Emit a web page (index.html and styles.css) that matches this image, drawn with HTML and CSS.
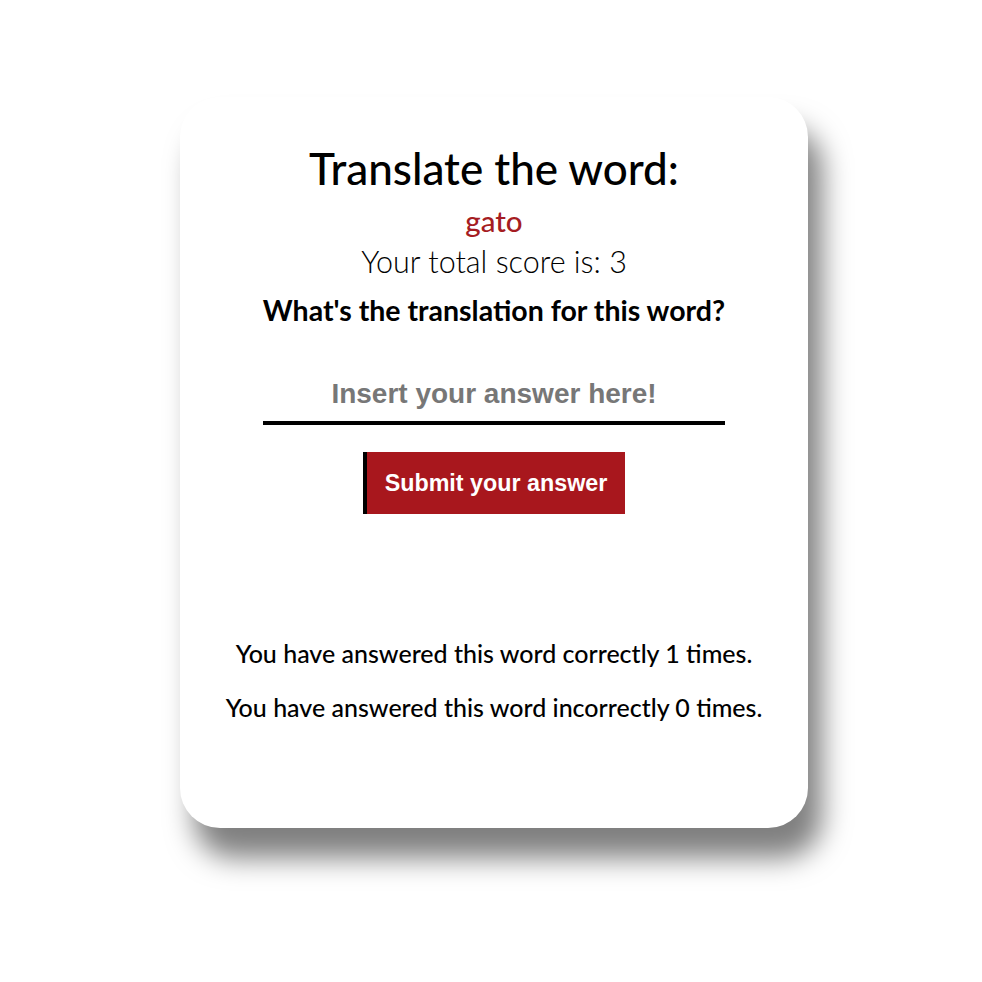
FILE: index.html
```html
<!DOCTYPE html>
<html lang="en">
<head>
<meta charset="utf-8">
<title>Translate the word</title>
<link rel="stylesheet" href="styles.css">
</head>
<body>
<main class="card">
  <h1 class="title">Translate the word:</h1>
  <p class="word">gato</p>
  <p class="score">Your total score is: 3</p>
  <h2 class="question">What's the translation for this word?</h2>
  <form class="answer-form">
    <input class="answer-input" type="text" placeholder="Insert your answer here!">
    <button class="submit-btn" type="button">Submit your answer</button>
  </form>
  <div class="stats">
    <p class="stat">You have answered this word correctly 1 times.</p>
    <p class="stat">You have answered this word incorrectly 0 times.</p>
  </div>
</main>
</body>
</html>
```

FILE: styles.css
```css
html, body {
  margin: 0;
  padding: 0;
  background: #ffffff;
}

body {
  box-sizing: border-box;
  min-height: 100vh;
  padding: 97px 0 0 180px;
  font-family: Lato, "Open Sans", sans-serif;
  color: #000;
}

.card {
  box-sizing: border-box;
  width: 628px;
  height: 731px;
  background: #fff;
  border-radius: 40px;
  box-shadow: 14px 30px 28px rgba(0, 0, 0, 0.5);
  display: flex;
  flex-direction: column;
  align-items: center;
  padding-top: 46px;
}

.title {
  margin: 0;
  font-size: 44px;
  font-weight: 500;
  line-height: 50px;
}

.word {
  margin: 10px 0 0;
  color: #a51c22;
  font-size: 29.5px;
  font-weight: 500;
  line-height: 36px;
}

.score {
  margin: 4px 0 0;
  font-size: 30.5px;
  font-weight: 300;
  line-height: 36px;
}

.question {
  margin: 13px 0 0;
  font-size: 28.5px;
  font-weight: 700;
  line-height: 36px;
}

.answer-form {
  display: flex;
  flex-direction: column;
  align-items: center;
  margin-top: 41px;
}

.answer-input {
  box-sizing: border-box;
  width: 462px;
  height: 56px;
  border: none;
  border-bottom: 4px solid #000;
  outline: none;
  background: transparent;
  text-align: center;
  font-family: "Liberation Sans", Arial, sans-serif;
  font-weight: 700;
  font-size: 28px;
  color: #333;
  padding: 0 0 3px;
}

.answer-input::placeholder {
  color: #777;
}

.submit-btn {
  margin-top: 27px;
  width: 262px;
  height: 62px;
  border: none;
  border-left: 4px solid #000;
  background: #a8171d;
  color: #fff;
  font-family: "Liberation Sans", Arial, sans-serif;
  font-weight: 700;
  font-size: 23.3px;
  padding: 0;
}

.stats {
  margin-top: 121px;
  display: flex;
  flex-direction: column;
  align-items: center;
  gap: 18px;
}

.stat {
  margin: 0;
  font-size: 25px;
  font-weight: 500;
  line-height: 36px;
}
```
